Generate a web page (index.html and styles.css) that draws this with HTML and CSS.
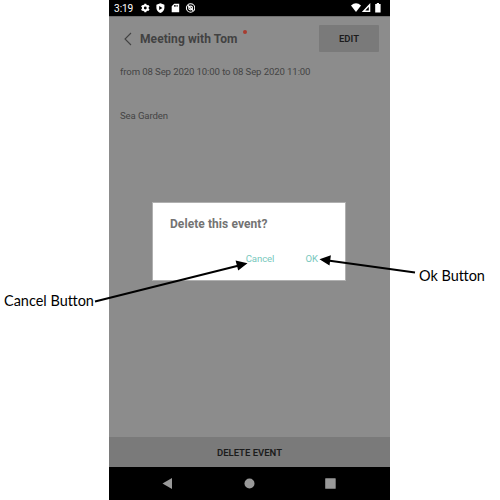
FILE: index.html
```html
<!DOCTYPE html>
<html lang="en">
<head>
<meta charset="utf-8">
<title>Meeting with Tom</title>
<link rel="stylesheet" href="styles.css">
</head>
<body>
<main class="phone">
  <div class="status">
    <span class="clock">3:19</span>
    <svg class="status-left" width="54" height="10" viewBox="0 0 54 10" fill="#fff">
      <g transform="translate(4.3 5)">
        <circle r="2.4" fill="none" stroke="#fff" stroke-width="2"/>
        <path d="M-1-4.3h2v1.5h-2zM-1 2.8h2v1.5h-2z"/>
        <path d="M-1-4.3h2v1.5h-2zM-1 2.8h2v1.5h-2z" transform="rotate(60)"/>
        <path d="M-1-4.3h2v1.5h-2zM-1 2.8h2v1.5h-2z" transform="rotate(120)"/>
      </g>
      <path fill-rule="evenodd" d="M19.400.3l4 1.500v3.100c0 2.200-1.700 4.200-4 5-2.300-.8-4-2.800-4-5V1.800zM18.200 3v4l3.200-2z"/>
      <path fill-rule="evenodd" d="M33.200.8h5v8.500h-7.500V3.300zM33 2v1.800h.8V2zm1.400 0v1.800h.8V2zm1.400 0v1.800h.8V2z"/>
      <g fill="none" stroke="#fff"><circle cx="49.600" cy="5" r="4.200" stroke-width="1.100"/><circle cx="49.600" cy="5" r="1.900" stroke-width="1.100"/><path d="M46.700 2.300l5.600 5.500" stroke-width="1.200"/></g>
    </svg>
    <svg class="status-right" width="32" height="10" viewBox="0 0 32 10" fill="#fff">
      <path d="M0 2.500Q5-1.800 10 2.500L5 9z"/>
      <path fill-rule="evenodd" d="M19.300 0v9h-8.500zM17.800 3.800L14.300 7.600h3.500z"/>
      <path d="M25.800 0h2.200v1h1.600v8.500h-5.400V1h1.600z"/>
    </svg>
  </div>
  <section class="event">
    <header class="event-head">
      <svg class="back" width="10" height="14" viewBox="0 0 10 14" fill="none" stroke="#424242" stroke-width="1.100"><path d="M8 1L2 7l6 6"/></svg>
      <h1 class="title">Meeting with Tom</h1>
      <span class="dot"></span>
      <button class="edit">EDIT</button>
    </header>
    <p class="time">from 08 Sep 2020 10:00 to 08 Sep 2020 11:00</p>
    <p class="place">Sea Garden</p>
  </section>
  <button class="delete">DELETE EVENT</button>
  <nav class="nav">
    <svg width="281" height="33" viewBox="0 0 281 33" fill="#999"><path d="M53.500 16.500L63 11v11z"/><circle cx="140.500" cy="16.500" r="5"/><rect x="216.200" y="11.300" width="10.500" height="10.500" rx=".5"/></svg>
  </nav>
</main>
<div class="dialog" role="dialog">
  <h2 class="question">Delete this event?</h2>
  <div class="actions"><span class="cancel">Cancel</span><span class="ok">OK</span></div>
</div>
<svg class="arrows" width="500" height="500" viewBox="0 0 500 500">
  <g stroke="#000" stroke-width="2"><path d="M95 301.500L239 265.500M415 272.500L328 260.500"/></g>
  <path d="M247.500 263.300l-9.300 7.200-2.600-10zM319.500 259.200l11.400-3.900-1.400 10.300z"/>
</svg>
<span class="note note-cancel">Cancel Bu<span class="join">t</span>ton</span>
<span class="note note-ok">Ok Bu<span class="join">t</span>ton</span>
</body>
</html>
```
FILE: styles.css
```css
* { box-sizing: border-box; }
body { margin: 0; width: 500px; height: 500px; overflow: hidden; background: #fff; position: relative; font-family: Roboto, sans-serif; }
h1, h2, p { margin: 0; }
button { border: 0; padding: 0; font-family: inherit; font-weight: 600; font-size: 9.5px; color: #1c1c1c; background: #7a7a7a; }
svg { display: block; flex: none; }
.phone { width: 281px; height: 500px; margin-left: 109px; display: flex; flex-direction: column; background: #8c8c8c; }
.status { height: 16px; flex: none; background: #000; display: flex; align-items: center; padding: 0 7px 0 5px; }
.clock { color: #fff; font-size: 10.2px; line-height: 16px; width: 27px; padding-top: 1px; white-space: nowrap; letter-spacing: -0.1px; }
.status-right { margin-left: auto; }
.event { flex: 1; border-top: 1px solid #707070; padding: 0 11px; }
.event-head { display: flex; align-items: center; height: 43px; }
.back { margin-left: 3px; }
.title { margin-left: 7px; font-size: 12px; line-height: 16px; font-weight: 700; color: #424242; white-space: nowrap; letter-spacing: 0.08px; }
.dot { width: 4px; height: 4px; border-radius: 50%; background: #a83c30; margin: 0 0 14px 5px; }
.edit { width: 60px; height: 27px; margin-left: auto; border-radius: 1px; }
.time, .place { font-size: 9.6px; line-height: 14px; color: #444; white-space: nowrap; letter-spacing: -0.11px; }
.time { margin-top: 5px; }
.place { margin-top: 30px; }
.delete { height: 30px; flex: none; }
.nav { height: 33px; background: #000; flex: none; }
.dialog { position: absolute; left: 152px; top: 202px; width: 194px; height: 79px; background: #fff; border: 1px solid #b0b0b0; padding: 13px 27px 0 17px; }
.question { font-size: 12px; line-height: 16px; font-weight: 700; color: #737373; white-space: nowrap; letter-spacing: 0.07px; }
.actions { display: flex; justify-content: flex-end; gap: 31px; margin-top: 20px; font-size: 9.6px; line-height: 14px; color: #78c8bd; }
.cancel { letter-spacing: -0.08px; }
.arrows { position: absolute; left: 0; top: 0; }
.note { position: absolute; font: 15px/20px Lato, sans-serif; color: #000; white-space: nowrap; transform: scaleX(.965); transform-origin: 0 50%; }
.join { letter-spacing: -0.5px; }
.note-cancel { left: 4px; top: 290px; }
.note-ok { left: 419px; top: 265px; }
```
